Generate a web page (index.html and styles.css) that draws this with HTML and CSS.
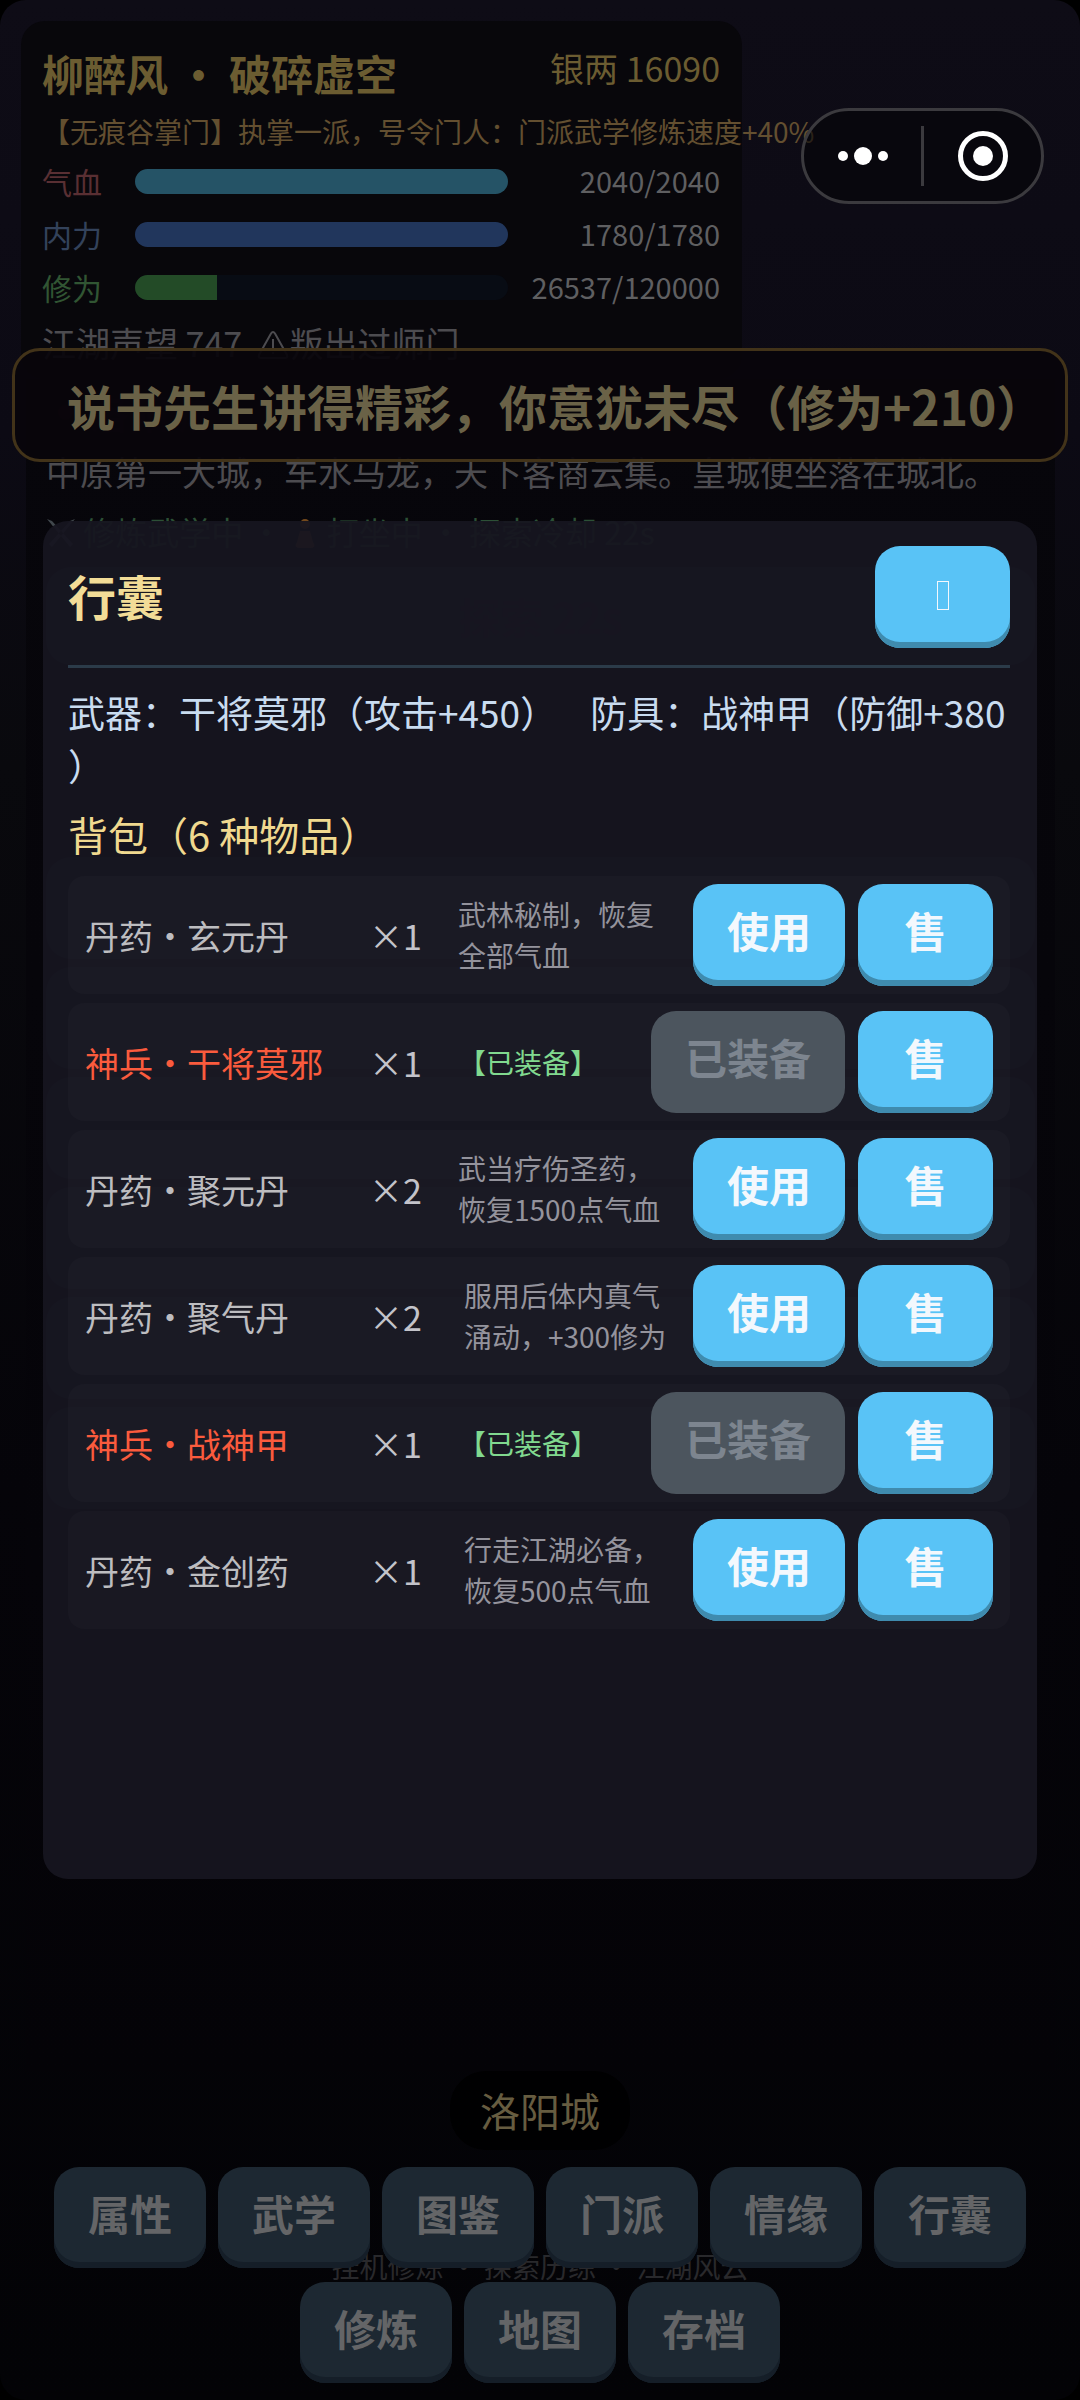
FILE: index.html
```html
<!DOCTYPE html>
<html lang="zh-CN">
<head>
<meta charset="utf-8">
<meta name="viewport" content="width=device-width, initial-scale=1">
<title>行囊</title>
<link rel="stylesheet" href="styles.css">
</head>
<body>
<div class="app">
  <header class="status">
    <div class="status-head">
      <h1 class="status-name">柳醉风 · 破碎虚空</h1>
      <span class="status-silver">银两 16090</span>
    </div>
    <p class="status-title">【无痕谷掌门】执掌一派，号令门人：门派武学修炼速度+40%</p>
    <div class="stat stat--hp"><span class="stat-label">气血</span><div class="bar"><div class="bar-fill" style="width:100%"></div></div><span class="stat-value">2040/2040</span></div>
    <div class="stat stat--mp"><span class="stat-label">内力</span><div class="bar"><div class="bar-fill" style="width:100%"></div></div><span class="stat-value">1780/1780</span></div>
    <div class="stat stat--xp"><span class="stat-label">修为</span><div class="bar"><div class="bar-fill" style="width:22.1%"></div></div><span class="stat-value">26537/120000</span></div>
    <p class="status-fame">江湖声望 747&nbsp; <svg class="warn" viewBox="0 0 32 32" aria-hidden="true"><path d="M14 4.500Q16 1.500 18 4.500L30 26Q31 29 28 29H4Q1 29 2 26ZM16 10V20M16 23V25"/></svg>叛出过师门</p>
  </header>

  <main class="scene">
    <h2 class="scene-place"><span class="pin"></span>洛阳城</h2>
    <p class="scene-text">中原第一大城，车水马龙，天下客商云集。皇城便坐落在城北。</p>
    <p class="scene-state"><svg class="state-icon" viewBox="0 0 30 30" aria-hidden="true"><path class="blade" d="M1 0L6 2 27 25 24 28ZM29 0L24 2 3 25 6 28Z"/></svg> 修炼武学中 · <svg class="state-icon" viewBox="0 0 30 30" aria-hidden="true"><path class="monk" d="M15 0a5 5 0 0 1 0 10a5 5 0 0 1 0-10M10 12H20L23 23Q27 29 20 29H10Q3 29 7 23Z"/></svg> 打坐中 · 探索冷却 22s</p>
    <button class="explore">探索 22s</button>
    <div class="people">
      <div class="person"></div>
      <div class="person"></div>
      <div class="person"></div>
      <div class="person"></div>
      <div class="person"></div>
      <div class="person"></div>
    </div>
  </main>

  <footer class="dock">
    <span class="place-chip">洛阳城</span>
    <p class="tagline">挂机修炼 · 探索历练 · 江湖风云</p>
    <nav class="menu">
      <button class="btn btn--dim">属性</button>
      <button class="btn btn--dim">武学</button>
      <button class="btn btn--dim">图鉴</button>
      <button class="btn btn--dim">门派</button>
      <button class="btn btn--dim">情缘</button>
      <button class="btn btn--dim">行囊</button>
      <button class="btn btn--dim">修炼</button>
      <button class="btn btn--dim">地图</button>
      <button class="btn btn--dim">存档</button>
    </nav>
  </footer>

  <div class="toast" role="status">说书先生讲得精彩，你意犹未尽（修为+210）</div>

  <section class="modal" role="dialog" aria-labelledby="bag-title">
    <div class="modal-head">
      <h2 class="modal-title" id="bag-title">行囊</h2>
      <button class="btn btn--close" aria-label="关闭"><span class="close-glyph"></span></button>
    </div>
    <p class="gear">武器：干将莫邪（攻击+450）&nbsp;&nbsp;&nbsp;&nbsp;防具：战神甲（防御+380）</p>
    <h3 class="bag-title">背包（6 种物品）</h3>
    <ul class="items">
      <li class="item"><span class="item-name">丹药·玄元丹</span><span class="item-count">×1</span><span class="item-desc">武林秘制，恢复<br>全部气血</span><button class="btn">使用</button><button class="btn">售</button></li>
      <li class="item item--rare"><span class="item-name">神兵·干将莫邪</span><span class="item-count">×1</span><span class="item-desc">【已装备】</span><button class="btn" disabled>已装备</button><button class="btn">售</button></li>
      <li class="item"><span class="item-name">丹药·聚元丹</span><span class="item-count">×2</span><span class="item-desc">武当疗伤圣药，<br>恢复1500点气血</span><button class="btn">使用</button><button class="btn">售</button></li>
      <li class="item"><span class="item-name">丹药·聚气丹</span><span class="item-count">×2</span><span class="item-desc item-desc--inset">服用后体内真气<br>涌动，+300修为</span><button class="btn">使用</button><button class="btn">售</button></li>
      <li class="item item--rare"><span class="item-name">神兵·战神甲</span><span class="item-count">×1</span><span class="item-desc">【已装备】</span><button class="btn" disabled>已装备</button><button class="btn">售</button></li>
      <li class="item"><span class="item-name">丹药·金创药</span><span class="item-count">×1</span><span class="item-desc item-desc--inset">行走江湖必备，<br>恢复500点气血</span><button class="btn">使用</button><button class="btn">售</button></li>
    </ul>
  </section>

  <div class="capsule">
    <button class="capsule-btn" aria-label="更多"><svg viewBox="0 0 60 60"><circle cx="10" cy="30" r="5"/><circle cx="30" cy="30" r="9"/><circle cx="50" cy="30" r="5"/></svg></button>
    <button class="capsule-btn" aria-label="退出"><svg viewBox="0 0 60 60"><circle class="ring" cx="30" cy="30" r="22.500"/><circle cx="30" cy="30" r="10"/></svg></button>
  </div>
</div>
</body>
</html>
```
FILE: styles.css
```css
* { box-sizing: border-box; }
body {
  margin: 0;
  background: #000;
  font-family: "Noto Sans CJK SC", sans-serif;
}
h1, h2, h3, p, ul { margin: 0; padding: 0; }
.app {
  position: relative;
  display: flex;
  flex-direction: column;
  min-height: 100vh;
  padding: 21px 25px 0 21px;
  overflow: hidden;
  border-radius: 26px;
  background: linear-gradient(#0e0c16, #0c0a14 18%, #09090d 32%, #050409 62%, #030306);
}

/* Player status */
.status {
  width: 721px;
  height: 358px;
  padding: 20px 22px 0 21px;
  border-radius: 24px;
  background: #08070b;
  white-space: nowrap;
}
.status-head { display: flex; justify-content: space-between; height: 68px; }
.status-name { font-size: 42px; line-height: 64px; color: #6b5c31; }
.status-silver { font-size: 34px; line-height: 54px; color: #6b5c31; }
.status-title { font-size: 28px; line-height: 44px; color: #634f30; }
.stat { display: flex; align-items: center; height: 53px; font-size: 30px; }
.stat-label { width: 93px; line-height: 53px; padding-top: 4px; }
.bar { width: 373px; height: 25px; margin-top: 4px; border-radius: 13px; overflow: hidden; background: #080c14; }
.bar-fill { height: 100%; }
.stat-value { flex: 1; text-align: right; font-size: 29px; color: #5f5f61; }
.stat--hp .stat-label { color: #592f33; }
.stat--hp .bar-fill { background: #255366; }
.stat--mp .stat-label { color: #33425b; }
.stat--mp .bar-fill { background: #21365c; }
.stat--xp .stat-label { color: #315533; }
.stat--xp .bar-fill { background: #234b27; }
.status-fame { padding-top: 4px; font-size: 34px; line-height: 54px; color: #4d4c50; }
.warn { width: 32px; height: 32px; vertical-align: -4px; fill: none; stroke: currentColor; stroke-width: 2; }

/* Current place */
.scene {
  flex: 1;
  margin-left: 5px;
  padding: 0 20px;
  background: linear-gradient(#07060b, #050409 70%, #040307);
}
.scene-place { display: flex; align-items: center; gap: 16px; height: 66px; padding-left: 12px; font-size: 40px; color: #110b10; }
.pin { width: 15px; height: 15px; border-radius: 50%; background: #2a0710; }
.scene-text { font-size: 34px; line-height: 54px; color: #4d4c50; }
.scene-state { padding-top: 8px; font-size: 32px; line-height: 48px; color: #2c5036; }
.state-icon { width: 30px; height: 30px; vertical-align: -4px; }
.blade { fill: #40474c; }
.monk { fill: #74491c; }
.explore {
  display: block;
  width: 100%;
  height: 98px;
  margin-top: 12px;
  border: 0;
  border-radius: 25px;
  background: #1d2832;
  color: #2e1d26;
  font: bold 42px/60px "Noto Sans CJK SC", sans-serif;
}
.people { display: flex; flex-direction: column; gap: 8px; margin-top: 192px; }
.person { height: 102px; border-radius: 25px; background: #1d2832; }

/* Bottom menu */
.dock { position: relative; display: flex; flex-direction: column; align-items: center; margin-right: -4px; padding-bottom: 17px; }
.place-chip { padding: 0 30px; margin-bottom: 17px; border-radius: 36px; background: #000001; font-size: 40px; line-height: 79px; color: #665c40; }
.menu { position: relative; display: flex; flex-wrap: wrap; justify-content: center; gap: 14px 12px; }
.tagline { position: absolute; bottom: 114px; font-size: 28px; line-height: 40px; color: #29292c; }

.btn {
  flex: none;
  min-width: 135px;
  height: 102px;
  padding: 0 34px 10px;
  border: 0;
  border-radius: 25px;
  background: #59c3f6;
  box-shadow: inset 0 -6px #3f8bae;
  color: #f3f8fd;
  font: bold 42px/60px "Noto Sans CJK SC", sans-serif;
}
.btn:disabled { background: #4c555e; box-shadow: none; color: #7d858f; }
.btn--dim { height: 101px; background: #1d2832; box-shadow: inset 0 -6px #151e28; color: #646567; }

/* Toast */
.toast {
  position: absolute;
  top: 348px;
  left: 12px;
  right: 12px;
  padding: 0 0 0 52px;
  border: 3px solid #423319;
  border-radius: 28px;
  background: #08050bf0;
  color: #6a6247;
  font-size: 48px;
  font-weight: bold;
  line-height: 108px;
  white-space: nowrap;
}

/* Bag dialog */
.modal {
  position: absolute;
  top: 521px;
  left: 43px;
  right: 43px;
  min-height: 1358px;
  padding: 25px 27px 25px 25px;
  border-radius: 25px;
  background: #161520f2;
}
.modal-head { display: flex; justify-content: space-between; align-items: flex-start; height: 122px; border-bottom: 3px solid #2b3b49; }
.modal-title { font-size: 48px; line-height: 98px; color: #f2dc97; }
.close-glyph { display: inline-block; width: 12px; height: 29px; border: 1px solid #f3f8fd; vertical-align: 0; }
.gear { padding-top: 18px; font-size: 37px; line-height: 53px; color: #c9dcf0; line-break: anywhere; }
.bag-title { padding-top: 8px; font-size: 40px; font-weight: 400; line-height: 68px; color: #f0d98f; }
.items { display: flex; flex-direction: column; gap: 9px; margin-top: 8px; list-style: none; }
.item { display: flex; align-items: center; gap: 13px; padding: 8px 17px; border-radius: 16px; background: #ffffff05; color: #bdbdc0; }
.item-name { width: 271px; font-size: 34px; }
.item-count { width: 76px; font-size: 34px; color: #c3c3ca; }
.item-desc { flex: 1; font-size: 28px; line-height: 41px; color: #94939c; white-space: nowrap; }
.item-desc--inset { padding-left: 6px; }
.item--rare .item-name { color: #fa5b3d; }
.item--rare .item-desc { color: #81d98f; }

/* Mini-program capsule */
.capsule {
  position: absolute;
  top: 108px;
  right: 36px;
  display: flex;
  align-items: center;
  width: 243px;
  height: 96px;
  border: 3px solid #3b3a3e;
  border-radius: 48px;
  background: #05050899;
}
.capsule-btn { flex: 1; height: 60px; padding: 0; border: 0; background: none; }
.capsule-btn + .capsule-btn { border-left: 3px solid #3b3a3e; }
.capsule-btn svg { display: block; width: 60px; height: 60px; margin: 0 auto; fill: #fff; }
.capsule-btn .ring { fill: none; stroke: #fff; stroke-width: 5; }
```
